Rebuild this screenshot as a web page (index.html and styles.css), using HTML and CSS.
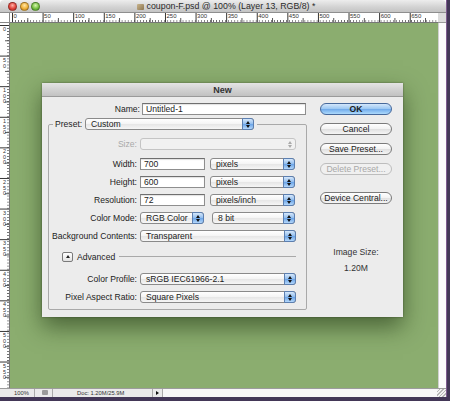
FILE: index.html
```html
<!DOCTYPE html>
<html>
<head>
	<meta charset="UTF-8">
	<title>coupon-F.psd</title>
	<link rel="stylesheet" href="styles.css">
</head>
<body>
	<div class="window">
		<div class="titlebar">
			<div class="lights">
				<span class="light red"></span>
				<span class="light yellow"></span>
				<span class="light green"></span>
			</div>
			<div class="title"><span class="doc-icon"></span>coupon-F.psd @ 100% (Layer 13, RGB/8) *</div>
		</div>

		<div class="ruler-row">
			<div class="corner"></div>
			<div class="ruler-h">
				<span>0</span><span>50</span><span>100</span><span>150</span><span>200</span>
				<span>250</span><span>300</span><span>350</span><span>400</span><span>450</span>
				<span>500</span><span>550</span><span>600</span><span>650</span>
			</div>
			<div class="ruler-end"></div>
		</div>

		<div class="workspace">
			<div class="ruler-v">
				<span>0</span><span>50</span><span>100</span><span>150</span><span>200</span><span>250</span>
				<span>300</span><span>350</span><span>400</span><span>450</span><span>500</span><span>550</span>
			</div>

			<div class="canvas">
				<div class="dialog">
					<div class="dialog-title">New</div>
					<div class="dialog-body">
						<div class="form">
							<div class="row name-row">
								<label class="lbl">Name:</label>
								<div class="field name">Untitled-1</div>
							</div>

							<fieldset class="group">
								<legend>
									<span class="legend-lbl">Preset:</span>
									<div class="popup preset">Custom<span class="arrows"></span></div>
								</legend>

								<div class="row size-row">
									<label class="lbl off">Size:</label>
									<div class="popup full off"><span class="arrows"></span></div>
								</div>
								<div class="row">
									<label class="lbl">Width:</label>
									<div class="field num">700</div>
									<div class="popup unit">pixels<span class="arrows"></span></div>
								</div>
								<div class="row">
									<label class="lbl">Height:</label>
									<div class="field num">600</div>
									<div class="popup unit">pixels<span class="arrows"></span></div>
								</div>
								<div class="row">
									<label class="lbl">Resolution:</label>
									<div class="field num">72</div>
									<div class="popup unit">pixels/inch<span class="arrows"></span></div>
								</div>
								<div class="row">
									<label class="lbl">Color Mode:</label>
									<div class="popup mode">RGB Color<span class="arrows"></span></div>
									<div class="popup depth">8 bit<span class="arrows"></span></div>
								</div>
								<div class="row">
									<label class="lbl">Background Contents:</label>
									<div class="popup full">Transparent<span class="arrows"></span></div>
								</div>

								<div class="advanced">
									<span class="disclose"></span>
									<span>Advanced</span>
									<span class="rule"></span>
								</div>

								<div class="row">
									<label class="lbl">Color Profile:</label>
									<div class="popup full">sRGB IEC61966-2.1<span class="arrows"></span></div>
								</div>
								<div class="row">
									<label class="lbl">Pixel Aspect Ratio:</label>
									<div class="popup full">Square Pixels<span class="arrows"></span></div>
								</div>
							</fieldset>
						</div>

						<div class="actions">
							<div class="btn default">OK</div>
							<div class="btn">Cancel</div>
							<div class="btn">Save Preset...</div>
							<div class="btn off">Delete Preset...</div>
							<div class="btn central">Device Central...</div>
							<div class="image-size">Image Size:<br>1.20M</div>
						</div>
					</div>
				</div>
			</div>

			<div class="scroll-v"></div>
		</div>

		<div class="statusbar">
			<span class="zoom">100%</span>
			<span class="status-icon"><span></span></span>
			<span class="doc">Doc: 1.20M/25.9M</span>
			<span class="more"></span>
			<span class="status-rest"></span>
			<span class="grip"></span>
		</div>
	</div>
</body>
</html>
```

FILE: styles.css
```css
*{
	margin: 0;
	padding: 0;
	box-sizing: border-box;
}
body{
	width: 450px;
	height: 401px;
	overflow: hidden;
	background: #433757;
	font-family: "Liberation Sans", Arial, sans-serif;
	font-size: 8.6px;
	color: #1c1c1c;
}
.window{
	width: 447px;
	background: #fff;
	border-right: 1px solid #7d5b8e;
}

/* title bar */
.titlebar{
	height: 13px;
	display: flex;
	align-items: center;
	background: linear-gradient(#ededed, #d2d2d2 60%, #c4c4c4);
	border-radius: 4px 4px 0 0;
	border-bottom: 1px solid #8e8e8e;
}
.lights{
	display: flex;
	gap: 2.5px;
	width: 42px;
	padding-left: 8px;
}
.light{
	width: 9px;
	height: 9px;
	border-radius: 50%;
	border: 1px solid rgba(0,0,0,0.3);
}
.red{ background: radial-gradient(circle at 50% 35%, #ffb3a8, #e2463d 55%, #a52420); }
.yellow{ background: radial-gradient(circle at 50% 35%, #ffe6a8, #f0b33a 55%, #b5781a); }
.green{ background: radial-gradient(circle at 50% 35%, #d7f5b0, #78c244 55%, #3f8a22); }
.title{
	flex: 1;
	text-align: center;
	padding-right: 36px;
	font-size: 8.8px;
	color: #2a2a2a;
	white-space: nowrap;
}
.doc-icon{
	display: inline-block;
	width: 7px;
	height: 6px;
	margin-right: 3px;
	background: linear-gradient(135deg, #c9b48c, #8c7650);
	border-radius: 1px;
	vertical-align: -1px;
}

/* rulers */
.ruler-row{
	display: flex;
	height: 10px;
}
.corner{
	width: 10px;
	background: #fff;
	border-right: 1px solid #888;
	border-bottom: 1px solid #888;
}
.ruler-h{
	width: 428px;
	display: flex;
	padding-left: 2px;
	overflow: hidden;
	border-bottom: 1px solid #777;
	background:
		linear-gradient(to right, #333 1px, transparent 1px) 2px 0 / 30.6px 100% repeat-x,
		linear-gradient(to right, #555 1px, transparent 1px) 17.3px 100% / 30.6px 4px repeat-x,
		linear-gradient(to right, #666 1px, transparent 1px) 2px 100% / 3.06px 2px repeat-x,
		#fff;
}
.ruler-h span{
	flex: 0 0 30.6px;
	padding-left: 1.5px;
	font-size: 6px;
	line-height: 6px;
	color: #333;
}
.ruler-end{
	flex: 1;
	background: #dcdcdc;
	border-bottom: 1px solid #999;
}

.workspace{
	display: flex;
	height: 365px;
}
.ruler-v{
	width: 10px;
	padding-top: 2px;
	overflow: hidden;
	border-right: 1px solid #777;
	background:
		linear-gradient(#333 1px, transparent 1px) 0 2px / 100% 30.6px repeat-y,
		linear-gradient(#555 1px, transparent 1px) 100% 17.3px / 4px 30.6px repeat-y,
		linear-gradient(#666 1px, transparent 1px) 100% 2px / 2px 3.06px repeat-y,
		#fff;
}
.ruler-v span{
	display: block;
	height: 30.6px;
	padding-top: 1px;
	padding-left: 1px;
	font-size: 5.5px;
	line-height: 5.5px;
	color: #333;
	writing-mode: vertical-lr;
	text-orientation: upright;
	letter-spacing: -0.5px;
}

/* canvas */
.canvas{
	width: 428px;
	background: #8bad6f;
	padding: 60px 0 0 32px;
}
.scroll-v{
	flex: 1;
	background: #fbfbfb;
	border-left: 1px solid #d0d0d0;
}

/* dialog */
.dialog{
	width: 361px;
	background: #ececec;
	box-shadow: 0 10px 22px rgba(20,40,10,0.55), 0 0 2px rgba(0,0,0,0.4);
}
.dialog-title{
	height: 14px;
	line-height: 14px;
	text-align: center;
	font-size: 9px;
	font-weight: bold;
	color: #333;
	background: linear-gradient(#e4e4e4, #d0d0d0 55%, #c2c2c2);
	border-bottom: 1px solid #9a9a9a;
}
.dialog-body{
	display: flex;
	gap: 13px;
	padding: 6px 11px 7px 6px;
}
.form{
	width: 259px;
}
.row{
	display: flex;
	align-items: center;
	height: 12px;
	margin-bottom: 6px;
}
.lbl{
	flex: 0 0 91px;
	padding-right: 3px;
	text-align: right;
	white-space: nowrap;
}
.lbl.off{
	color: #a9a9a9;
}
.name-row{
	margin-bottom: 3px;
}
.name-row .lbl{
	flex-basis: 94px;
	padding-right: 2px;
}
.field{
	height: 12px;
	line-height: 10px;
	padding-left: 3px;
	background: #fff;
	border: 1px solid #8e8e8e;
	border-top-color: #6f6f6f;
	box-shadow: inset 0 1px 1px rgba(0,0,0,0.12);
}
.field.name{
	width: 164px;
}
.field.num{
	width: 65px;
	margin-right: 5px;
}

/* popup menus */
.popup{
	position: relative;
	height: 12px;
	line-height: 10px;
	padding-left: 5px;
	border: 1px solid #8a8a8a;
	border-radius: 3px;
	background: linear-gradient(#fff, #f4f4f4 50%, #e6e6e6 52%, #f6f6f6);
	white-space: nowrap;
}
.popup .arrows{
	position: absolute;
	top: -1px;
	right: -1px;
	width: 12px;
	height: 12px;
	border: 1px solid #5c7fb0;
	border-radius: 0 3px 3px 0;
	background: linear-gradient(#d6e8fb, #8fbcee 50%, #6aa3e6 52%, #b5d8fb);
}
.popup .arrows::before,
.popup .arrows::after{
	content: "";
	position: absolute;
	left: 3px;
	border-left: 2px solid transparent;
	border-right: 2px solid transparent;
}
.popup .arrows::before{
	top: 1.5px;
	border-bottom: 3px solid #111;
}
.popup .arrows::after{
	bottom: 1.5px;
	border-top: 3px solid #111;
}
.popup.off{
	border-color: #c4c4c4;
	background: #f1f1f1;
}
.popup.off .arrows{
	border-color: transparent;
	background: none;
}
.popup.off .arrows::before{
	border-bottom-color: #aaa;
}
.popup.off .arrows::after{
	border-top-color: #aaa;
}
.popup.full{
	width: 156px;
}
.popup.unit{
	width: 85px;
}
.popup.mode{
	width: 64px;
	margin-right: 8px;
}
.popup.depth{
	width: 83px;
}
.popup.preset{
	width: 169px;
}

/* preset group */
.group{
	width: 259px;
	margin-top: 3px;
	padding: 8px 7px 0 0;
	border: 1px solid #a9a9a9;
	border-radius: 2px;
}
.group legend{
	display: flex;
	align-items: center;
	margin-left: 4px;
	padding: 0 3px 0 2px;
}
.legend-lbl{
	width: 30px;
	padding-right: 3px;
	text-align: right;
}
.size-row{
	margin-bottom: 8px;
}
.advanced{
	display: flex;
	align-items: center;
	height: 11px;
	margin: 9px 0 11px 13px;
}
.disclose{
	position: relative;
	width: 11px;
	height: 10px;
	margin-right: 4px;
	border: 1px solid #7a7a7a;
	border-radius: 2px;
	background: linear-gradient(#fff, #e2e2e2);
}
.disclose::after{
	content: "";
	position: absolute;
	left: 2.5px;
	top: 2.5px;
	border-left: 2.5px solid transparent;
	border-right: 2.5px solid transparent;
	border-bottom: 3px solid #222;
}
.rule{
	flex: 1;
	height: 1px;
	margin: 0 3px 0 4px;
	background: #a9a9a9;
}
.group .row:last-child{
	margin-bottom: 6px;
}

/* buttons */
.actions{
	width: 72px;
	text-align: center;
}
.btn{
	height: 12px;
	line-height: 10px;
	margin-bottom: 8px;
	border: 1px solid #7b7b7b;
	border-radius: 6px;
	background: linear-gradient(#fff, #f2f2f2 50%, #e0e0e0 52%, #f5f5f5);
	white-space: nowrap;
}
.btn.default{
	font-weight: bold;
	border-color: #46689a;
	background: linear-gradient(#d3e7fb, #99c6f2 50%, #70aaeb 52%, #addafc);
}
.btn.off{
	color: #a8a8a8;
	border-color: #bdbdbd;
	background: #f0f0f0;
}
.btn.central{
	margin-top: 17px;
}
.image-size{
	margin-top: 40px;
	line-height: 16px;
	color: #333;
}

/* status bar */
.statusbar{
	display: flex;
	height: 9px;
	font-size: 5.8px;
	line-height: 8px;
	color: #333;
	background: #eaeaea;
	border-top: 1px solid #9c9c9c;
}
.zoom{
	width: 35px;
	padding-left: 14px;
	border-right: 1px solid #aaa;
}
.status-icon{
	width: 18px;
	padding: 1px 0 0 7px;
	border-right: 1px solid #aaa;
}
.status-icon span{
	display: block;
	width: 6px;
	height: 5px;
	border-radius: 1px;
	background: #9a9a9a;
}
.doc{
	width: 100px;
	padding-left: 24px;
	white-space: nowrap;
	border-right: 1px solid #aaa;
}
.more{
	position: relative;
	width: 10px;
	border-right: 1px solid #aaa;
}
.more::after{
	content: "";
	position: absolute;
	left: 3px;
	top: 1.5px;
	border-top: 2.5px solid transparent;
	border-bottom: 2.5px solid transparent;
	border-left: 3px solid #111;
}
.status-rest{
	flex: 1;
	background: #f7f7f7;
}
.grip{
	width: 9px;
	background: repeating-linear-gradient(135deg, #f2f2f2 0 1.5px, #b5b5b5 1.5px 2.5px);
}
```
